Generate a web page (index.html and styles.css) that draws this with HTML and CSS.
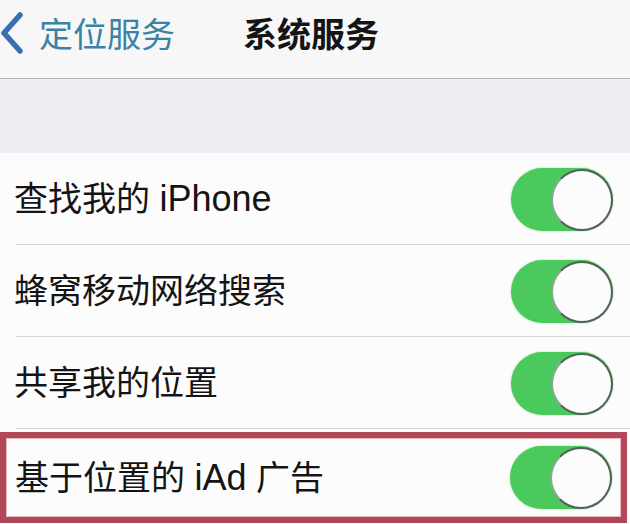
FILE: index.html
```html
<!DOCTYPE html>
<html lang="zh-CN">
<head>
<meta charset="utf-8">
<title>系统服务</title>
<link rel="stylesheet" href="styles.css">
</head>
<body>
<div class="screen">
  <header class="nav">
    <div class="back">
      <svg class="chevron" width="24" height="42" viewBox="0 0 24 42">
        <polyline points="20,3 4,21 20,39" fill="none" stroke="#3a6db2" stroke-width="5.5" stroke-linecap="round" stroke-linejoin="round"/>
      </svg>
      <span class="back-text">定位服务</span>
    </div>
    <div class="title">系统服务</div>
  </header>
  <div class="spacer"></div>
  <div class="list">
    <div class="row">
      <span class="label">查找我的 <span class="latin">iPhone</span></span>
      <span class="toggle"><span class="knob"></span></span>
    </div>
    <div class="row">
      <span class="label">蜂窝移动网络搜索</span>
      <span class="toggle"><span class="knob"></span></span>
    </div>
    <div class="row">
      <span class="label">共享我的位置</span>
      <span class="toggle"><span class="knob"></span></span>
    </div>
    <div class="highlight">
      <div class="row last">
        <span class="label">基于位置的 <span class="latin">iAd</span> 广告</span>
        <span class="toggle"><span class="knob"></span></span>
      </div>
    </div>
  </div>
</div>
</body>
</html>
```
FILE: styles.css
```css
html, body {
  margin: 0;
  padding: 0;
  background: #fbfbfb;
}
.screen {
  width: 630px;
  height: 524px;
  overflow: hidden;
  font-family: "Liberation Sans", "Noto Sans CJK SC", sans-serif;
  color: #111;
}
.nav {
  height: 78px;
  background: #f7f7f8;
  border-bottom: 1px solid #b4b4b6;
  display: flex;
  align-items: center;
}
.back {
  display: flex;
  align-items: center;
  margin-top: -12px;
}
.chevron {
  display: block;
}
.back-text {
  margin-left: 15px;
  font-family: "Noto Sans CJK SC", sans-serif;
  font-size: 34px;
  color: #3a82a6;
  line-height: 40px;
}
.title {
  margin-left: 68px;
  margin-top: -12px;
  font-family: "Noto Sans CJK SC", sans-serif;
  font-size: 34px;
  font-weight: 700;
  color: #141414;
  line-height: 40px;
}
.spacer {
  height: 74px;
  background: #efeef2;
}
.list {
  display: flex;
  flex-direction: column;
  background: #fcfcfc;
}
.row {
  height: 92px;
  display: flex;
  align-items: center;
  justify-content: space-between;
  padding-left: 14px;
  padding-right: 17px;
  box-sizing: border-box;
  background-image: linear-gradient(#d4d4d6, #d4d4d6);
  background-repeat: no-repeat;
  background-size: calc(100% - 16px) 1px;
  background-position: 16px 100%;
}
.row.last {
  background-image: none;
  height: 79px;
  padding-left: 9px;
  padding-right: 9px;
}
.label {
  font-size: 34px;
  line-height: 42px;
  color: #141414;
}
.latin {
  font-size: 36px;
}
.toggle {
  width: 102px;
  height: 63px;
  border-radius: 32px;
  background: #4cc95c;
  position: relative;
  box-shadow: 0 0 2px #7de38a;
  flex: none;
}
.knob {
  position: absolute;
  right: 0;
  top: 1px;
  width: 58px;
  height: 58px;
  border-radius: 50%;
  background: #fcfcfc;
  border: 2px solid #56605a;
  border-left-color: #8aa890;
}
.highlight {
  margin-top: 3px;
  width: 627px;
  height: 91px;
  box-sizing: border-box;
  border: 6px solid #b2475a;
  background: #fdfcfc;
  box-shadow: inset 0 0 0 1px #e6b9c0;
}
```
